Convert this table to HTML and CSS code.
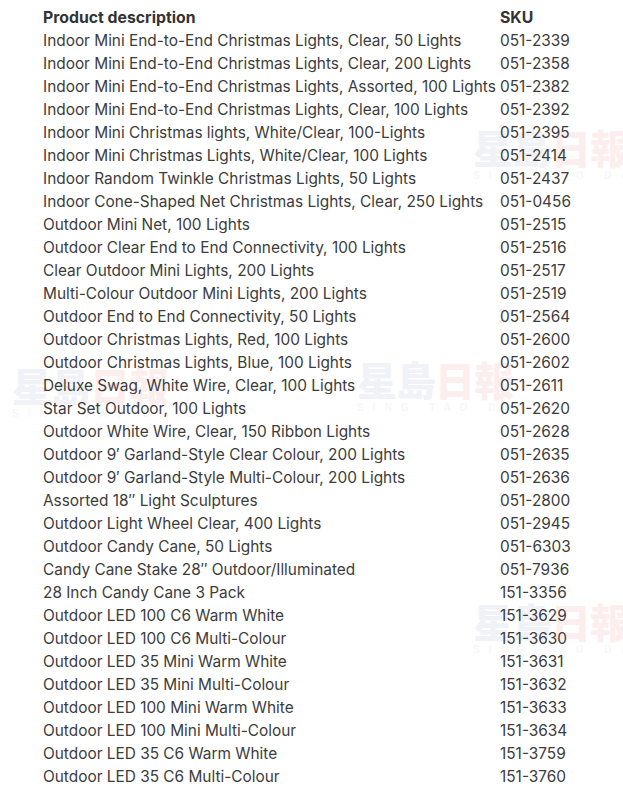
FILE: index.html
```html
<!DOCTYPE html>
<html lang="en">
<head>
<meta charset="utf-8">
<title>Products</title>
<link rel="stylesheet" href="styles.css">
</head>
<body>
<div class="page">
  <table class="products">
    <thead>
      <tr><th class="desc">Product description</th><th class="sku">SKU</th></tr>
    </thead>
    <tbody>
      <tr><td>Indoor Mini End-to-End Christmas Lights, Clear, 50 Lights</td><td>051-2339</td></tr>
      <tr><td>Indoor Mini End-to-End Christmas Lights, Clear, 200 Lights</td><td>051-2358</td></tr>
      <tr><td>Indoor Mini End-to-End Christmas Lights, Assorted, 100 Lights</td><td>051-2382</td></tr>
      <tr><td>Indoor Mini End-to-End Christmas Lights, Clear, 100 Lights</td><td>051-2392</td></tr>
      <tr><td>Indoor Mini Christmas lights, White/Clear, 100-Lights</td><td>051-2395</td></tr>
      <tr><td>Indoor Mini Christmas Lights, White/Clear, 100 Lights</td><td>051-2414</td></tr>
      <tr><td>Indoor Random Twinkle Christmas Lights, 50 Lights</td><td>051-2437</td></tr>
      <tr><td>Indoor Cone-Shaped Net Christmas Lights, Clear, 250 Lights</td><td>051-0456</td></tr>
      <tr><td>Outdoor Mini Net, 100 Lights</td><td>051-2515</td></tr>
      <tr><td>Outdoor Clear End to End Connectivity, 100 Lights</td><td>051-2516</td></tr>
      <tr><td>Clear Outdoor Mini Lights, 200 Lights</td><td>051-2517</td></tr>
      <tr><td>Multi-Colour Outdoor Mini Lights, 200 Lights</td><td>051-2519</td></tr>
      <tr><td>Outdoor End to End Connectivity, 50 Lights</td><td>051-2564</td></tr>
      <tr><td>Outdoor Christmas Lights, Red, 100 Lights</td><td>051-2600</td></tr>
      <tr><td>Outdoor Christmas Lights, Blue, 100 Lights</td><td>051-2602</td></tr>
      <tr><td>Deluxe Swag, White Wire, Clear, 100 Lights</td><td>051-2611</td></tr>
      <tr><td>Star Set Outdoor, 100 Lights</td><td>051-2620</td></tr>
      <tr><td>Outdoor White Wire, Clear, 150 Ribbon Lights</td><td>051-2628</td></tr>
      <tr><td>Outdoor 9′ Garland-Style Clear Colour, 200 Lights</td><td>051-2635</td></tr>
      <tr><td>Outdoor 9′ Garland-Style Multi-Colour, 200 Lights</td><td>051-2636</td></tr>
      <tr><td>Assorted 18″ Light Sculptures</td><td>051-2800</td></tr>
      <tr><td>Outdoor Light Wheel Clear, 400 Lights</td><td>051-2945</td></tr>
      <tr><td>Outdoor Candy Cane, 50 Lights</td><td>051-6303</td></tr>
      <tr><td>Candy Cane Stake 28″ Outdoor/Illuminated</td><td>051-7936</td></tr>
      <tr><td>28 Inch Candy Cane 3 Pack</td><td>151-3356</td></tr>
      <tr><td>Outdoor LED 100 C6 Warm White</td><td>151-3629</td></tr>
      <tr><td>Outdoor LED 100 C6 Multi-Colour</td><td>151-3630</td></tr>
      <tr><td>Outdoor LED 35 Mini Warm White</td><td>151-3631</td></tr>
      <tr><td>Outdoor LED 35 Mini Multi-Colour</td><td>151-3632</td></tr>
      <tr><td>Outdoor LED 100 Mini Warm White</td><td>151-3633</td></tr>
      <tr><td>Outdoor LED 100 Mini Multi-Colour</td><td>151-3634</td></tr>
      <tr><td>Outdoor LED 35 C6 Warm White</td><td>151-3759</td></tr>
      <tr><td>Outdoor LED 35 C6 Multi-Colour</td><td>151-3760</td></tr>
    </tbody>
  </table>

  <div class="wm wm-1"><span class="wm-blue">星島</span><span class="wm-red">日報</span><span class="wm-sub">SING TAO DAILY</span></div>
  <div class="wm wm-2"><span class="wm-blue">星島</span><span class="wm-red">日報</span><span class="wm-sub">SING TAO DAILY</span></div>
  <div class="wm wm-3"><span class="wm-blue">星島</span><span class="wm-red">日報</span><span class="wm-sub">SING TAO DAILY</span></div>
  <div class="wm wm-4"><span class="wm-blue">星島</span><span class="wm-red">日報</span><span class="wm-sub">SING TAO DAILY</span></div>
</div>
</body>
</html>
```

FILE: styles.css
```css
html, body {
  margin: 0;
  padding: 0;
  background: #ffffff;
}

.page {
  position: relative;
  width: 623px;
  height: 794px;
  overflow: hidden;
  padding: 6px 0 0 43px;
  box-sizing: border-box;
}

.products {
  border-collapse: collapse;
  font-family: Inter, "Noto Sans", sans-serif;
  font-size: 15.4px;
  color: #3c3c3c;
  position: relative;
  z-index: 1;
}

.products th,
.products td {
  padding: 0;
  height: 23px;
  line-height: 23px;
  text-align: left;
  white-space: nowrap;
  vertical-align: middle;
}

.products th {
  font-weight: 700;
  font-size: 15.8px;
  color: #333333;
}

.products th.desc,
.products td:first-child {
  width: 457px;
}

.wm {
  position: absolute;
  width: 172px;
  height: 64px;
  font-family: "Noto Sans CJK TC", "Noto Sans CJK SC", sans-serif;
  font-weight: 900;
  font-size: 40px;
  line-height: 46px;
  letter-spacing: -1px;
  white-space: nowrap;
  z-index: 0;
}

.wm-blue { color: #f0f2f8; }
.wm-red { color: #fdeeee; }

.wm-sub {
  display: block;
  font-family: "Liberation Sans", sans-serif;
  font-size: 10px;
  line-height: 12px;
  letter-spacing: 9px;
  font-weight: 700;
  color: #f7f7f7;
}

.wm-1 { left: 12px; top: 362px; }
.wm-2 { left: 357px; top: 356px; }
.wm-3 { left: 473px; top: 124px; }
.wm-4 { left: 473px; top: 598px; }
```
